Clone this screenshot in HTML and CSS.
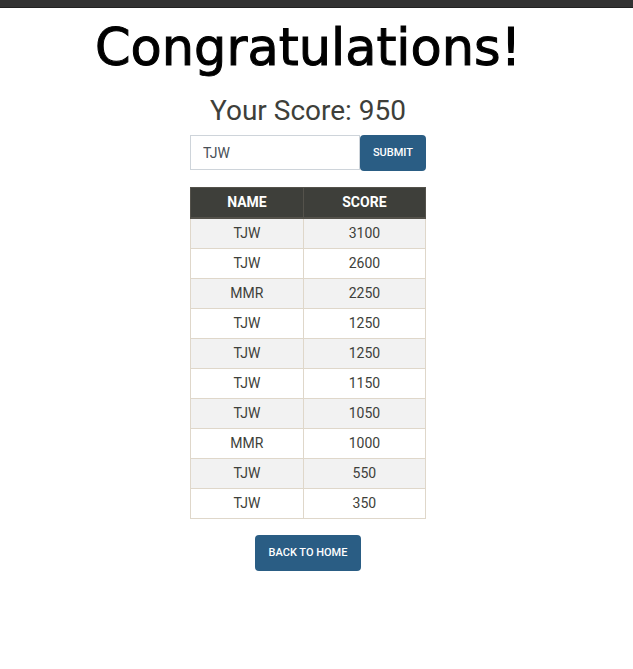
FILE: index.html
```html
<!DOCTYPE html>
<html lang="en">
<head>
<meta charset="utf-8">
<meta name="viewport" content="width=device-width, initial-scale=1">
<title>Congratulations!</title>
<link rel="stylesheet" href="styles.css">
</head>
<body>
<header class="topbar"></header>
<main class="page">
  <h1 class="title">Congratulations!</h1>
  <h2 class="score">Your Score: 950</h2>
  <div class="board">
    <form class="entry">
      <input class="field" type="text" aria-label="Name" value="TJW">
      <button class="btn" type="button">SUBMIT</button>
    </form>
    <table class="scores">
      <thead>
        <tr><th scope="col">NAME</th><th scope="col">SCORE</th></tr>
      </thead>
      <tbody>
        <tr><td>TJW</td><td>3100</td></tr>
        <tr><td>TJW</td><td>2600</td></tr>
        <tr><td>MMR</td><td>2250</td></tr>
        <tr><td>TJW</td><td>1250</td></tr>
        <tr><td>TJW</td><td>1250</td></tr>
        <tr><td>TJW</td><td>1150</td></tr>
        <tr><td>TJW</td><td>1050</td></tr>
        <tr><td>MMR</td><td>1000</td></tr>
        <tr><td>TJW</td><td>550</td></tr>
        <tr><td>TJW</td><td>350</td></tr>
      </tbody>
    </table>
  </div>
  <button class="btn btn-home" type="button">BACK TO HOME</button>
</main>
</body>
</html>
```
FILE: styles.css
```css
* {
  box-sizing: border-box;
}

body {
  margin: 0;
  background: #fff;
  color: #3e3f3a;
  font: 400 14px/21px Roboto, sans-serif;
}

.topbar {
  height: 8px;
  background: #333;
  border-bottom: 1px solid #222;
}

.page {
  display: flex;
  flex-direction: column;
  align-items: center;
  padding: 8px 17px 16px 0;
}

.title {
  margin: 0;
  color: #000;
  font: 400 51px/64px "DejaVu Sans", sans-serif;
  -webkit-text-stroke: 1px #000;
}

.score {
  margin: 14px 0 8px;
  font-size: 28px;
  font-weight: 400;
  line-height: 33px;
}

.board {
  width: 236px;
  margin-bottom: 16px;
}

.entry {
  display: flex;
  align-items: flex-start;
  margin-bottom: 16px;
}

.field {
  flex: 1;
  min-width: 0;
  height: 35px;
  padding: 6px 12px;
  border: 1px solid #ced4da;
  color: #495057;
  font: inherit;
}

.btn {
  height: 36px;
  padding: 0 13px;
  border: 0;
  border-radius: 4px;
  background: #2a5d84;
  color: #fff;
  font: 500 11px/22px Roboto, sans-serif;
}

.btn-home {
  padding: 0 14px;
}

.scores {
  width: 100%;
  border-collapse: collapse;
  text-align: center;
}

.scores th,
.scores td {
  height: 30px;
  padding: 4px;
  border: 1px solid #dfd7ca;
}

.scores th {
  width: 52%;
  background: #3e3f3a;
  border-color: #54524b;
  border-bottom-width: 2px;
  color: #fff;
  font-weight: 700;
}

.scores th:first-child {
  width: 48%;
}

.scores tbody tr:nth-child(odd) {
  background: #f2f2f2;
}
```
